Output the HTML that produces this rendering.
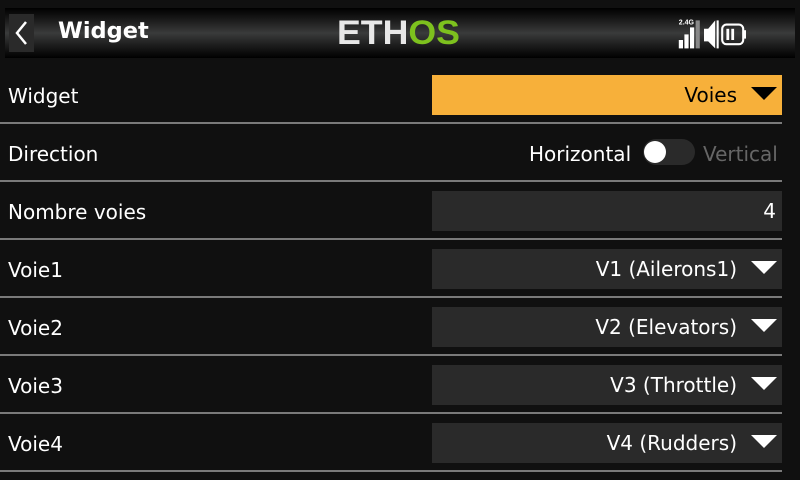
<!DOCTYPE html>
<html><head><style>
body{margin:0;width:800px;height:480px;background:#101010;overflow:hidden;font-family:"DejaVu Sans","Liberation Sans",sans-serif;color:#fff;position:relative}
.hdr{position:absolute;left:5px;top:8px;width:790px;height:50px;background:linear-gradient(#000 0%,#1c1c1c 25%,#3a3b3b 50%,#1c1c1c 75%,#000 100%)}
.back{position:absolute;left:9px;top:14px;width:25px;height:38px;background:#2a2a2a}
.title{position:absolute;left:58px;top:18px;font-size:22.5px;font-weight:bold;font-family:"DejaVu Sans",sans-serif}
.logo{position:absolute;left:337px;top:14px;font-size:34px;font-weight:bold;font-family:"Liberation Sans",sans-serif;transform:scaleX(1.05);transform-origin:left}
.lbl{position:absolute;left:8px;font-size:20px}
.sep{position:absolute;left:0;width:782px;height:2px;background:#7a7a7a}
.fld{position:absolute;left:432px;width:350px;height:40px;background:#2a2a2a;font-size:20px;text-align:right;box-sizing:border-box;line-height:40px}
.tri{display:inline-block;width:0;height:0;border-left:13px solid transparent;border-right:13px solid transparent;border-top:13px solid #fff;margin-left:14px;vertical-align:2px;margin-right:1px}
</style></head><body>
<div class="hdr"></div>
<div class="back"><svg width="25" height="38"><path d="M17 8 L8 19 L17 30" stroke="#fff" stroke-width="2.5" fill="none"/></svg></div>
<div class="title">Widget</div>
<div class="logo"><span style="color:#e8e8e8">ETH</span><span style="color:#7dc11e">OS</span></div>
<svg style="position:absolute;left:676px;top:16px" width="112" height="34" viewBox="0 0 80 24">
<text x="2" y="6" font-size="5" fill="#fff" font-family="Liberation Sans" font-weight="bold">2.4G</text>
<rect x="2" y="17" width="3" height="6" fill="#fff"/><rect x="6" y="13" width="3" height="10" fill="#fff"/><rect x="10" y="8" width="3" height="15" fill="#fff"/><rect x="14" y="3" width="3" height="20" fill="#888"/>
<path d="M20 9 h3 l5-6 v20 l-5-5 h-3z" fill="#fff"/><rect x="29" y="3" width="1.5" height="20" fill="#fff"/>
<rect x="33" y="6" width="15" height="14" rx="3" fill="none" stroke="#fff" stroke-width="1.5"/><rect x="48" y="10" width="2" height="6" fill="#fff"/>
<rect x="36" y="9" width="2" height="8" fill="#fff"/><rect x="39.5" y="9" width="2" height="8" fill="#fff"/>
</svg>

<div class="lbl" style="top:84px">Widget</div>
<div class="fld" style="top:75px;background:#f7b03a;color:#000;padding-right:4px">Voies<span class="tri" style="border-top-color:#000"></span></div>
<div class="sep" style="top:122px"></div>

<div class="lbl" style="top:142px">Direction</div>
<div style="position:absolute;left:529px;top:142px;font-size:20px">Horizontal</div>
<div style="position:absolute;left:643px;top:139px;width:52px;height:26px;border-radius:13px;background:#2a2a2a"></div>
<div style="position:absolute;left:644px;top:141px;width:22px;height:22px;border-radius:11px;background:#fff"></div>
<div style="position:absolute;left:703px;top:142px;font-size:20px;color:#666">Vertical</div>
<div class="sep" style="top:180px"></div>

<div class="lbl" style="top:200px">Nombre voies</div>
<div class="fld" style="top:191px;padding-right:6px">4</div>
<div class="sep" style="top:238px"></div>

<div class="lbl" style="top:258px">Voie1</div>
<div class="fld" style="top:249px;padding-right:4px">V1 (Ailerons1)<span class="tri"></span></div>
<div class="sep" style="top:296px"></div>

<div class="lbl" style="top:316px">Voie2</div>
<div class="fld" style="top:307px;padding-right:4px">V2 (Elevators)<span class="tri"></span></div>
<div class="sep" style="top:354px"></div>

<div class="lbl" style="top:374px">Voie3</div>
<div class="fld" style="top:365px;padding-right:4px">V3 (Throttle)<span class="tri"></span></div>
<div class="sep" style="top:412px"></div>

<div class="lbl" style="top:432px">Voie4</div>
<div class="fld" style="top:423px;padding-right:4px">V4 (Rudders)<span class="tri"></span></div>
<div class="sep" style="top:470px"></div>
</body></html>
